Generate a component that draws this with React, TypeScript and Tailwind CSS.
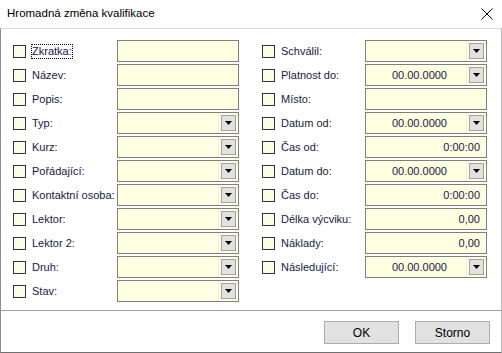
import React from "react";

type Field = { label: string; value?: string; dd?: boolean; focus?: boolean };

const left: Field[] = [
  { label: "Zkratka:", focus: true },
  { label: "Název:" },
  { label: "Popis:" },
  { label: "Typ:", dd: true },
  { label: "Kurz:", dd: true },
  { label: "Pořádající:", dd: true },
  { label: "Kontaktní osoba:", dd: true },
  { label: "Lektor:", dd: true },
  { label: "Lektor 2:", dd: true },
  { label: "Druh:", dd: true },
  { label: "Stav:", dd: true },
];

const right: Field[] = [
  { label: "Schválil:", dd: true },
  { label: "Platnost do:", value: "00.00.0000", dd: true },
  { label: "Místo:" },
  { label: "Datum od:", value: "00.00.0000", dd: true },
  { label: "Čas od:", value: "0:00:00" },
  { label: "Datum do:", value: "00.00.0000", dd: true },
  { label: "Čas do:", value: "0:00:00" },
  { label: "Délka výcviku:", value: "0,00" },
  { label: "Náklady:", value: "0,00" },
  { label: "Následující:", value: "00.00.0000", dd: true },
];

function Row({ f, labelW }: { f: Field; labelW: string }) {
  return (
    <div className="flex items-center h-[22px]">
      <div className="w-[13px] h-[13px] border border-[#333333] bg-[#fdfde6] shrink-0" />
      <div className={`ml-[6px] ${labelW} shrink-0 flex items-center`}>
        {f.focus ? (
          <span className="border border-dotted border-black leading-[13px] px-0 -ml-[1px]">{f.label}</span>
        ) : (
          <span className="leading-[13px]">{f.label}</span>
        )}
      </div>
      <div className="w-[122px] h-[22px] border border-[#7f7f7f] bg-[#ffffe1] flex items-center shrink-0">
        <div className={`flex-1 text-right ${f.dd ? "pr-[19px]" : "pr-[6px]"} text-[#151a45]`}>{f.value ?? ""}</div>
        {f.dd && (
          <div className="h-full flex items-center border-l border-[#efefdc] pl-[2px] pr-[2px]">
            <div className="w-[15px] h-[16px] bg-[#e1e1e1] border border-[#a0a0a0] flex items-center justify-center">
              <svg width="7" height="4" viewBox="0 0 7 4">
                <path d="M0 0H7L3.5 4Z" fill="#000" />
              </svg>
            </div>
          </div>
        )}
      </div>
    </div>
  );
}

export default function App() {
  return (
    <div
      className="w-[502px] h-[353px] bg-white flex flex-col text-black"
      style={{ fontFamily: '"Liberation Sans", Arial, sans-serif' }}
    >
      <div className="h-[28px] shrink-0 flex items-center pl-[7px] pr-[9px] text-[11.5px]">
        <span className="flex-1">Hromadná změna kvalifikace</span>
        <svg width="12" height="12" viewBox="0 0 12 12" className="mb-[1px]">
          <path d="M0.5 0.5L11.5 11.5M11.5 0.5L0.5 11.5" stroke="#000" strokeWidth="1" />
        </svg>
      </div>
      <div className="flex-1 flex flex-col border-t border-[#d9d9d9] border-l border-r border-b border-l-[#8c8c8c] border-r-[#bdbdbd] border-b-[#6f6f6f]">
        <div className="flex pt-[11px] pl-[12px] gap-[23px] text-[11px] text-[#151a45]">
          <div className="flex flex-col gap-[2px] w-[226px]">
            {left.map((f) => (
              <Row key={f.label} f={f} labelW="w-[85px]" />
            ))}
          </div>
          <div className="flex flex-col gap-[2px] w-[225px]">
            {right.map((f) => (
              <Row key={f.label} f={f} labelW="w-[84px]" />
            ))}
          </div>
        </div>
        <div className="mt-[8px] h-px bg-[#a0a0a0]" />
        <div className="flex justify-end gap-[16px] pr-[11px] mt-[10px] text-[12px]">
          <button className="w-[75px] h-[23px] bg-[#e1e1e1] border border-[#adadad] flex items-center justify-center">
            OK
          </button>
          <button className="w-[75px] h-[23px] bg-[#e1e1e1] border border-[#adadad] flex items-center justify-center">
            Storno
          </button>
        </div>
      </div>
    </div>
  );
}
